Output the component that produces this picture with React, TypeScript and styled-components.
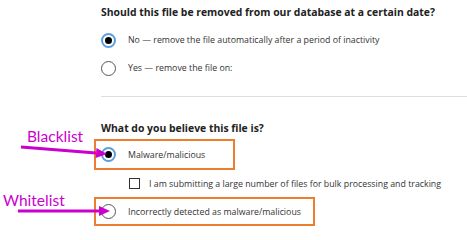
import React from "react";
import styled, { createGlobalStyle } from "styled-components";

const Global = createGlobalStyle`
  html, body { margin: 0; padding: 0; background: #ffffff; }
  body { width: 467px; height: 233px; overflow: hidden; font-family: "Open Sans", "Noto Sans", sans-serif; }
`;

const Page = styled.div`
  position: relative;
  width: 467px;
  height: 233px;
  overflow: hidden;
`;

const Section = styled.section<{ $top: number }>`
  display: flex;
  flex-direction: column;
  align-items: flex-start;
  padding-left: 101px;
  margin-top: ${(p) => p.$top}px;
`;

const Heading = styled.h2<{ $gapBelow: number }>`
  margin: 0 0 ${(p) => p.$gapBelow}px 0;
  font-size: 10.4px;
  line-height: 14px;
  font-weight: 700;
  color: #222;
  white-space: nowrap;
`;

const Row = styled.div<{ $h: number; $indent?: number }>`
  display: flex;
  align-items: center;
  height: ${(p) => p.$h}px;
  margin-left: ${(p) => p.$indent ?? 0}px;
  white-space: nowrap;
`;

const Highlight = styled.div<{ $h: number; $padRight: number }>`
  display: flex;
  align-items: center;
  box-sizing: border-box;
  height: ${(p) => p.$h}px;
  margin-left: -7px;
  padding: 0 ${(p) => p.$padRight}px 0 5px;
  border: 2px solid #ed7d31;
  white-space: nowrap;
`;

const Radio = styled.span<{ $checked?: boolean }>`
  box-sizing: border-box;
  width: 15px;
  height: 15px;
  flex: none;
  border-radius: 50%;
  border: ${(p) => (p.$checked ? "2px solid #5a9fe0" : "1px solid #555")};
  display: flex;
  align-items: center;
  justify-content: center;
  &::after {
    content: "";
    display: ${(p) => (p.$checked ? "block" : "none")};
    width: 7px;
    height: 7px;
    border-radius: 50%;
    background: #000;
  }
`;

const Checkbox = styled.span`
  box-sizing: border-box;
  width: 11px;
  height: 11px;
  flex: none;
  border: 1px solid #333;
`;

const Label = styled.span<{ $gap: number }>`
  margin-left: ${(p) => p.$gap}px;
  font-size: 8.8px;
  color: #333;
`;

const Divider = styled.hr`
  margin: 14px 0 0 101px;
  border: none;
  height: 1px;
  background: #dedede;
`;

const Tag = styled.div<{ $left: number; $top: number }>`
  position: absolute;
  left: ${(p) => p.$left}px;
  top: ${(p) => p.$top}px;
  font-family: "Lato", "Open Sans", sans-serif;
  font-size: 15.5px;
  line-height: 18px;
  color: #cc00cc;
  white-space: nowrap;
`;

const Overlay = styled.svg`
  position: absolute;
  left: 0;
  top: 0;
  pointer-events: none;
`;

function Arrow({ x1, y1, x2, y2 }: { x1: number; y1: number; x2: number; y2: number }) {
  const ang = Math.atan2(y2 - y1, x2 - x1);
  const len = 11;
  const half = 5;
  const bx = x2 - len * Math.cos(ang);
  const by = y2 - len * Math.sin(ang);
  const px = -Math.sin(ang) * half;
  const py = Math.cos(ang) * half;
  return (
    <g>
      <line x1={x1} y1={y1} x2={bx} y2={by} stroke="#cc00cc" strokeWidth={3} />
      <polygon
        points={`${x2},${y2} ${bx + px},${by + py} ${bx - px},${by - py}`}
        fill="#cc00cc"
      />
    </g>
  );
}

export default function App() {
  return (
    <Page>
      <Global />
      <Section $top={5}>
        <Heading $gapBelow={7}>Should this file be removed from our database at a certain date?</Heading>
        <Row $h={28}>
          <Radio $checked />
          <Label $gap={12}>No — remove the file automatically after a period of inactivity</Label>
        </Row>
        <Row $h={28}>
          <Radio />
          <Label $gap={12}>Yes — remove the file on:</Label>
        </Row>
      </Section>
      <Divider />
      <Section $top={24}>
        <Heading $gapBelow={4}>What do you believe this file is?</Heading>
        <Highlight $h={31} $padRight={28}>
          <Radio $checked />
          <Label $gap={12}>Malware/malicious</Label>
        </Highlight>
        <Row $h={27} $indent={28}>
          <Checkbox />
          <Label $gap={9}>I am submitting a large number of files for bulk processing and tracking</Label>
        </Row>
        <Highlight $h={29} $padRight={12}>
          <Radio />
          <Label $gap={12}>Incorrectly detected as malware/malicious</Label>
        </Highlight>
      </Section>
      <Tag $left={27} $top={127}>Blacklist</Tag>
      <Tag $left={3} $top={191}>Whitelist</Tag>
      <Overlay width={467} height={233}>
        <Arrow x1={21} y1={147} x2={107} y2={154} />
        <Arrow x1={18} y1={211} x2={110} y2={211} />
      </Overlay>
    </Page>
  );
}
